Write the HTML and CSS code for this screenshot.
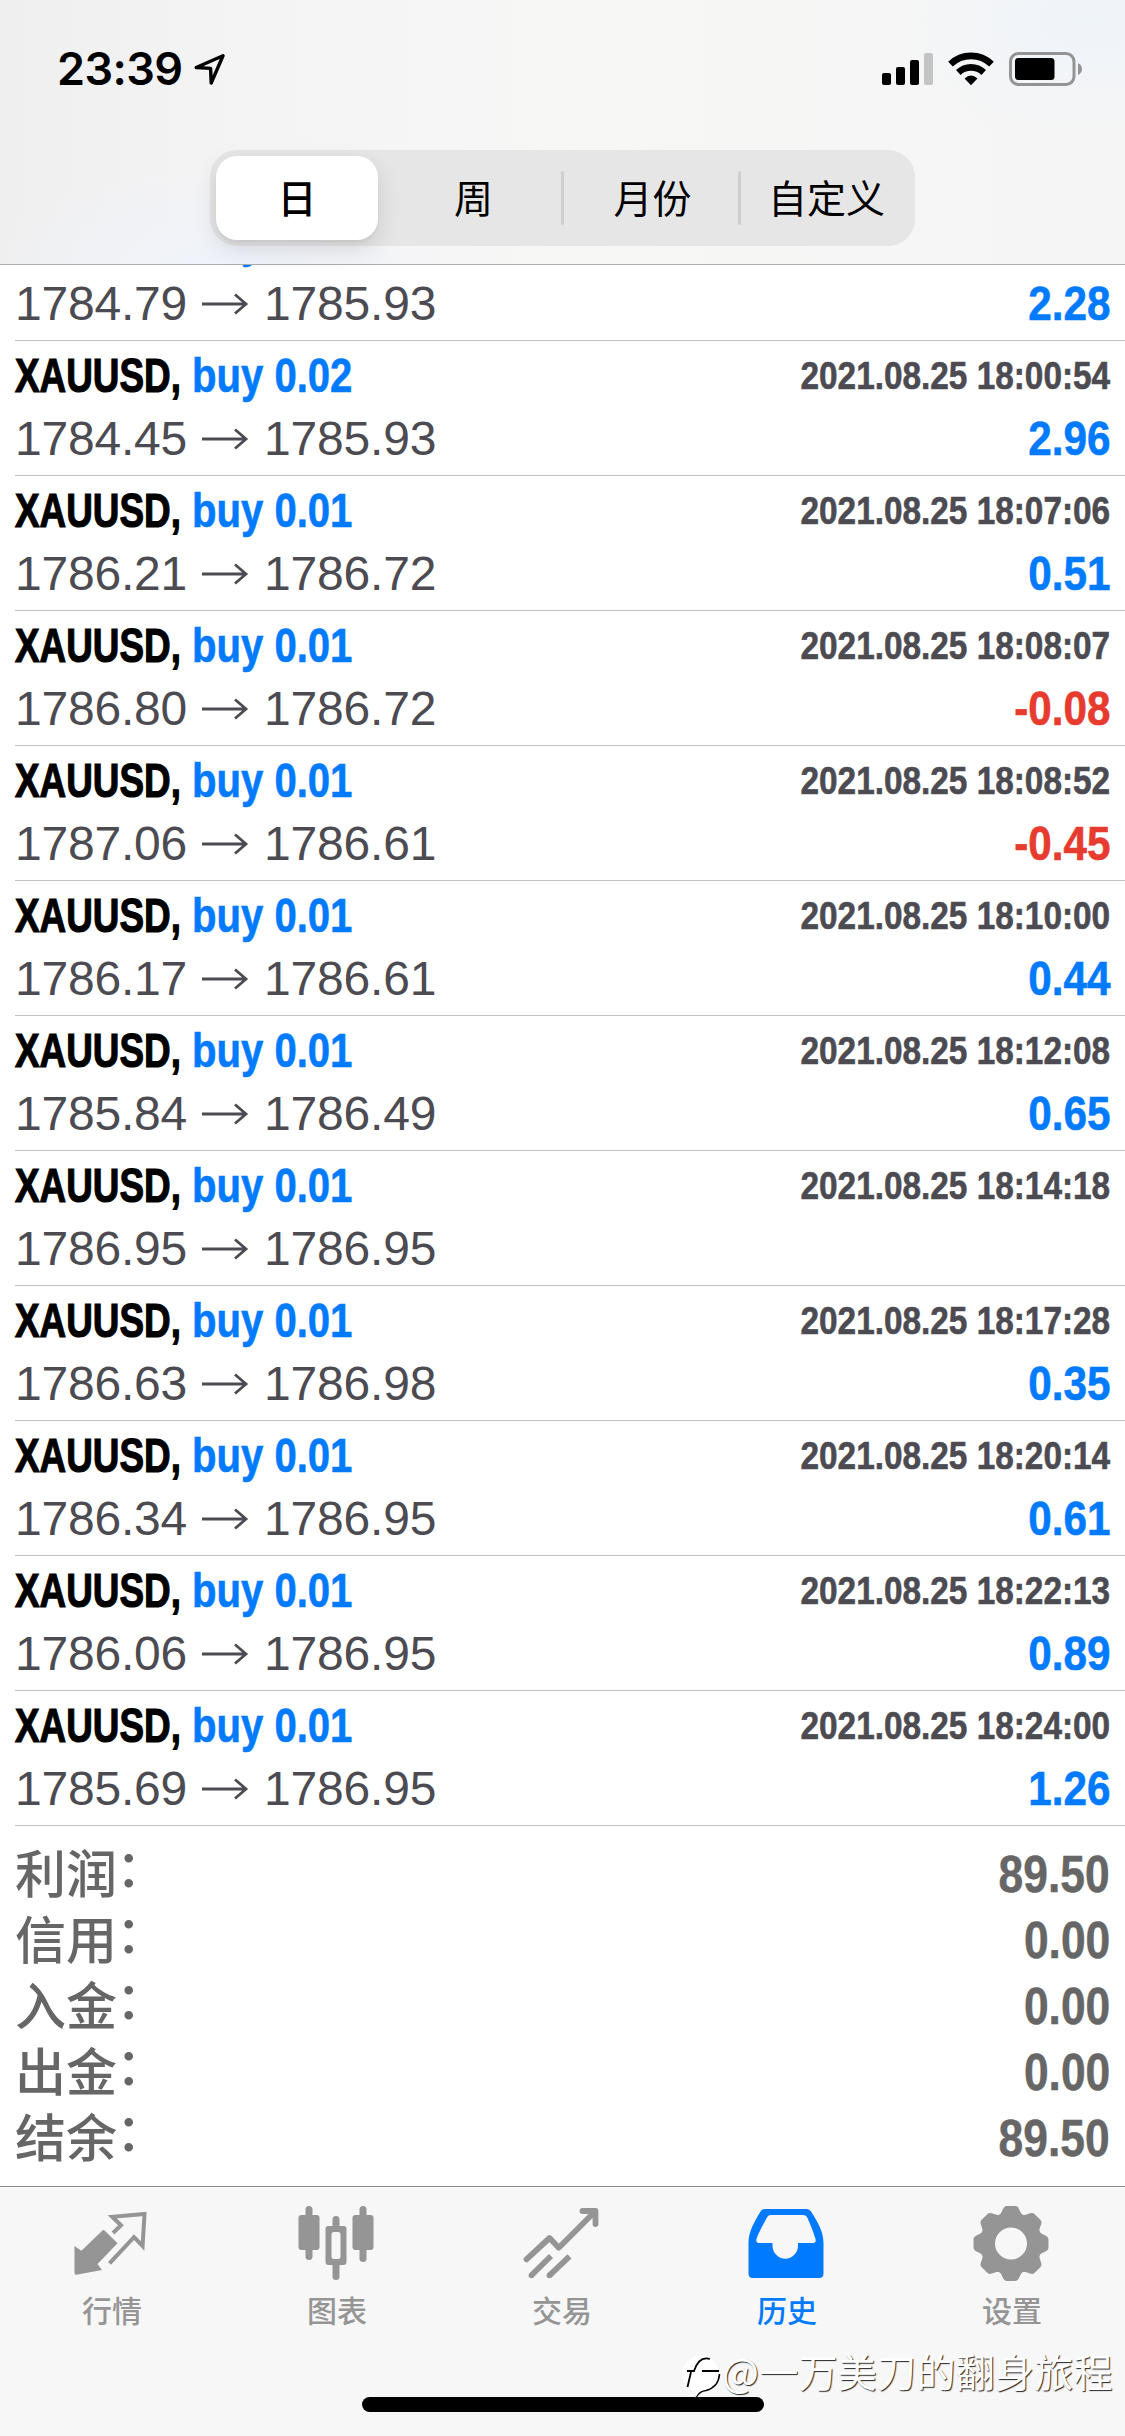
FILE: index.html
```html
<!DOCTYPE html>
<html lang="zh-CN">
<head>
<meta charset="utf-8">
<title>历史</title>
<link rel="stylesheet" href="styles.css">
</head>
<body>
<div class="screen">
  <header class="header">
    <div class="status">
      <span class="clock">23:39</span>
      <svg class="location" width="34" height="34" viewBox="0 0 34 34"><path d="M4.2 16.5 31 4.800 19.200 32 18.600 17.400Z" fill="none" stroke="#000" stroke-width="3.400" stroke-linejoin="round"/></svg>
      <div class="indicators">
        <svg width="51" height="34" viewBox="0 0 51 34"><rect y="21" width="9" height="12" rx="2"/><rect x="14" y="15" width="9" height="18" rx="2"/><rect x="28" y="8" width="9" height="25" rx="2"/><rect x="42" y="1" width="9" height="32" rx="2" fill="#c4c4c4"/></svg>
        <svg width="46" height="34" viewBox="0 0 46 34"><g fill="none" stroke="#000" stroke-width="6.600"><path d="M2.500 12.200A29.500 29.500 0 0 1 43.500 12.200"/><path d="M10.300 20.500A18.300 18.300 0 0 1 35.700 20.500"/></g><path d="M16.500 26.600Q23 20.400 29.500 26.600L23 33.200Z"/></svg>
        <svg width="74" height="34" viewBox="0 0 74 34"><rect x="1.500" y="1.500" width="63.500" height="31" rx="8" fill="none" stroke="#949494" stroke-width="3"/><rect x="6" y="6" width="39.500" height="22" rx="3.500"/><path d="M69 11Q73 13 73 17T69 23Z" fill="#949494"/></svg>
      </div>
    </div>
    <nav class="segments">
      <span class="segment selected">日</span>
      <span class="segment week">周</span>
      <span class="segment divided">月份</span>
      <span class="segment divided custom">自定义</span>
    </nav>
  </header>

  <main class="content">
    <svg class="defs" width="0" height="0"><symbol id="arrow" viewBox="0 0 48 24"><path d="M1 12H45M34 2.500 45 12 34 21.500" fill="none" stroke="#4c4b52" stroke-width="2.800"/></symbol></svg>
    <div class="deals">
      <div class="deal"><div class="line top"><span class="symbol"><b>XAUUSD,</b></span><span class="order">buy 0.01</span></div><div class="line prices"><span>1784.79</span><svg class="arrow"><use href="#arrow"/></svg><span>1785.93</span><span class="profit">2.28</span></div></div>
      <div class="deal"><div class="line top"><span class="symbol"><b>XAUUSD,</b></span><span class="order">buy 0.02</span><span class="date">2021.08.25 18:00:54</span></div><div class="line prices"><span>1784.45</span><svg class="arrow"><use href="#arrow"/></svg><span>1785.93</span><span class="profit">2.96</span></div></div>
      <div class="deal"><div class="line top"><span class="symbol"><b>XAUUSD,</b></span><span class="order">buy 0.01</span><span class="date">2021.08.25 18:07:06</span></div><div class="line prices"><span>1786.21</span><svg class="arrow"><use href="#arrow"/></svg><span>1786.72</span><span class="profit">0.51</span></div></div>
      <div class="deal"><div class="line top"><span class="symbol"><b>XAUUSD,</b></span><span class="order">buy 0.01</span><span class="date">2021.08.25 18:08:07</span></div><div class="line prices"><span>1786.80</span><svg class="arrow"><use href="#arrow"/></svg><span>1786.72</span><span class="profit loss">-0.08</span></div></div>
      <div class="deal"><div class="line top"><span class="symbol"><b>XAUUSD,</b></span><span class="order">buy 0.01</span><span class="date">2021.08.25 18:08:52</span></div><div class="line prices"><span>1787.06</span><svg class="arrow"><use href="#arrow"/></svg><span>1786.61</span><span class="profit loss">-0.45</span></div></div>
      <div class="deal"><div class="line top"><span class="symbol"><b>XAUUSD,</b></span><span class="order">buy 0.01</span><span class="date">2021.08.25 18:10:00</span></div><div class="line prices"><span>1786.17</span><svg class="arrow"><use href="#arrow"/></svg><span>1786.61</span><span class="profit">0.44</span></div></div>
      <div class="deal"><div class="line top"><span class="symbol"><b>XAUUSD,</b></span><span class="order">buy 0.01</span><span class="date">2021.08.25 18:12:08</span></div><div class="line prices"><span>1785.84</span><svg class="arrow"><use href="#arrow"/></svg><span>1786.49</span><span class="profit">0.65</span></div></div>
      <div class="deal"><div class="line top"><span class="symbol"><b>XAUUSD,</b></span><span class="order">buy 0.01</span><span class="date">2021.08.25 18:14:18</span></div><div class="line prices"><span>1786.95</span><svg class="arrow"><use href="#arrow"/></svg><span>1786.95</span></div></div>
      <div class="deal"><div class="line top"><span class="symbol"><b>XAUUSD,</b></span><span class="order">buy 0.01</span><span class="date">2021.08.25 18:17:28</span></div><div class="line prices"><span>1786.63</span><svg class="arrow"><use href="#arrow"/></svg><span>1786.98</span><span class="profit">0.35</span></div></div>
      <div class="deal"><div class="line top"><span class="symbol"><b>XAUUSD,</b></span><span class="order">buy 0.01</span><span class="date">2021.08.25 18:20:14</span></div><div class="line prices"><span>1786.34</span><svg class="arrow"><use href="#arrow"/></svg><span>1786.95</span><span class="profit">0.61</span></div></div>
      <div class="deal"><div class="line top"><span class="symbol"><b>XAUUSD,</b></span><span class="order">buy 0.01</span><span class="date">2021.08.25 18:22:13</span></div><div class="line prices"><span>1786.06</span><svg class="arrow"><use href="#arrow"/></svg><span>1786.95</span><span class="profit">0.89</span></div></div>
      <div class="deal"><div class="line top"><span class="symbol"><b>XAUUSD,</b></span><span class="order">buy 0.01</span><span class="date">2021.08.25 18:24:00</span></div><div class="line prices"><span>1785.69</span><svg class="arrow"><use href="#arrow"/></svg><span>1786.95</span><span class="profit">1.26</span></div></div>
    </div>
    <div class="totals">
      <div class="total"><span class="label">利润<i>：</i></span><span class="sum">89.50</span></div>
      <div class="total"><span class="label">信用<i>：</i></span><span class="sum">0.00</span></div>
      <div class="total"><span class="label">入金<i>：</i></span><span class="sum">0.00</span></div>
      <div class="total"><span class="label">出金<i>：</i></span><span class="sum">0.00</span></div>
      <div class="total"><span class="label">结余<i>：</i></span><span class="sum">89.50</span></div>
    </div>
  </main>

  <footer class="tabbar">
    <div class="tab">
      <svg class="icon" viewBox="0 0 90 90"><path d="M7.500 46 14.400 50.700 35.500 30.600Q36.600 29.500 37.800 30.800L50.500 43.300 30.500 64 35 70 9.500 74.800Q7.500 75 7.500 73Z" fill="currentColor"/><path d="M46 33 54 25.300 45.200 16.800 77.500 14 75.600 46 67 37.200 42.500 63.300" fill="none" stroke="currentColor" stroke-width="4"/></svg>
      <span>行情</span>
    </div>
    <div class="tab">
      <svg class="icon" viewBox="0 0 90 90" fill="currentColor"><rect x="6.500" y="15" width="21" height="35" rx="3"/><rect x="13.500" y="6" width="7" height="54" rx="3.500"/><path fill-rule="evenodd" d="M36.500 26h15a3 3 0 0 1 3 3v33a3 3 0 0 1-3 3h-15a3 3 0 0 1-3-3V29a3 3 0 0 1 3-3Zm5.500 6a2.500 2.500 0 0 0-2.500 2.500v22a2.500 2.500 0 0 0 2.500 2.500h4a2.500 2.500 0 0 0 2.500-2.500v-22A2.500 2.500 0 0 0 46 32Z"/><path d="M40.500 27V19.500a3.500 3.500 0 0 1 7 0V27ZM40.500 64V76.500a3.500 3.500 0 0 0 7 0V64Z"/><rect x="60.500" y="15" width="21" height="35" rx="3"/><rect x="67.500" y="6" width="7" height="56" rx="3.500"/></svg>
      <span>图表</span>
    </div>
    <div class="tab">
      <svg class="icon" viewBox="0 0 90 90" fill="none" stroke="currentColor" stroke-width="5.800" stroke-linejoin="round"><path stroke-linecap="round" d="M9.500 59.300 32.500 38 41.800 47.700 77.500 12M65.500 11H78.500V24"/><path d="M14.500 75.300 34 56M32.500 75.300 52.500 56.300"/><g fill="currentColor" stroke="none"><circle cx="14.500" cy="75.300" r="2.900"/><circle cx="32.500" cy="75.300" r="2.900"/></g></svg>
      <span>交易</span>
    </div>
    <div class="tab active">
      <svg class="icon" viewBox="0 0 90 90" fill="currentColor"><path fill-rule="evenodd" d="M23 9H65Q67.500 9 69 11.500C75 21 81.500 31 81.500 43V73.500Q81.500 78 77 78H11Q6.500 78 6.500 73.500V43C6.500 31 13 21 18.500 11.500Q20 9 23 9ZM29 15Q26 15 24.700 18C20.500 26 16.500 33 14.500 39Q13.500 43 17.500 43H30.500V45.500A12.700 13.200 0 0 0 56 45.500V43H70.500Q74.500 43 73.500 39C71.500 32 69 26 65.500 18Q64.300 15 61 15Z"/></svg>
      <span>历史</span>
    </div>
    <div class="tab">
      <svg class="icon" viewBox="0 0 90 90"><g transform="translate(44 43.500)" fill="currentColor"><circle r="23.500" fill="none" stroke="currentColor" stroke-width="15"/><g id="teeth"><path id="tooth" d="M-13-27.500C-8-30-9-37.500-4-37.500H4C9-37.500 8-30 13-27.500Z"/><use href="#tooth" transform="rotate(45)"/><use href="#tooth" transform="rotate(90)"/><use href="#tooth" transform="rotate(135)"/></g><use href="#teeth" transform="rotate(180)"/></g></svg>
      <span>设置</span>
    </div>
    <div class="home"></div>
    <div class="watermark">
      <svg width="42" height="46" viewBox="0 0 42 46"><circle cx="20.500" cy="20" r="18.500" fill="#fff"/><path d="M16 43Q20 37 26 36.500C35 34 39 27 39.500 20" fill="none" stroke="#000" stroke-width="1.600"/><path d="M15 44 21 22 37 20 36 29 30 34 20 37Z" fill="#fff"/><path d="M7 17H14C17 8 22 2.500 30 5M22 17H39M11 18 7.500 33" fill="none" stroke="#000" stroke-width="1.800"/></svg>
      <span>@一万美刀的翻身旅程</span>
    </div>
  </footer>
</div>
</body>
</html>
```
FILE: styles.css
```css
* { box-sizing: border-box; }

body {
  margin: 0;
  background: #fff;
  font-family: "Liberation Sans", "Noto Sans CJK SC", sans-serif;
}

.screen {
  width: 1125px;
  height: 2436px;
  display: flex;
  flex-direction: column;
  overflow: hidden;
}

/* Status bar and period switcher */
.header {
  height: 265px;
  flex: none;
  display: flex;
  flex-direction: column;
  align-items: center;
  border-bottom: 1px solid #adadaf;
  background:
    radial-gradient(ellipse 240px 100px at 225px 265px, #eff3fa, transparent),
    radial-gradient(ellipse 200px 120px at 1090px 20px, #eff4fa, transparent),
    linear-gradient(90deg, #efefef, #f5f4f5 22%, #f7f7f6 50%, #f5f5f5 100%);
}

.status {
  width: 100%;
  height: 150px;
  padding: 52px 42px 0 57px;
  display: flex;
  align-items: flex-start;
}

.clock {
  width: 135px;
  font: 600 45px/34px Inter, sans-serif;
  letter-spacing: -0.6px;
  white-space: nowrap;
}

.location { margin-top: -1px; }

.indicators {
  margin-left: auto;
  display: flex;
  gap: 15px;
}

.segments {
  width: 705px;
  height: 96px;
  padding: 6px;
  display: grid;
  grid-template-columns: 162px 186px 177px 1fr;
  border-radius: 27px;
  background: #e6e6e7;
}

.segment {
  display: flex;
  align-items: center;
  justify-content: center;
  padding-bottom: 4px;
  font: 400 39px/1 "Noto Sans CJK SC", sans-serif;
  position: relative;
}

.selected {
  border-radius: 21px;
  background: #fff;
  font-weight: 500;
  box-shadow: 0 9px 24px rgba(0, 0, 0, .12), 0 3px 3px rgba(0, 0, 0, .04);
}

.week { padding-left: 5px; }

.custom { padding-left: 3px; }

.divided::before {
  content: "";
  position: absolute;
  left: -3px;
  top: 15px;
  width: 3px;
  height: 54px;
  border-radius: 2px;
  background: #cfcfd2;
}

/* Closed deals */
.content {
  height: 1921px;
  flex: none;
  overflow: hidden;
}

.defs { display: block; }

.deals {
  margin-top: -59px;
  padding-left: 15px;
}

.deal {
  height: 135px;
  padding: 3px 15px 0 0;
  border-bottom: 1px solid #c2c2c4;
}

.line {
  height: 63px;
  display: flex;
  align-items: center;
  font-size: 48px;
  line-height: 64px;
  white-space: nowrap;
}

.top {
  font-weight: 700;
  -webkit-text-stroke: .6px currentColor;
}

.symbol { width: 177px; color: #000; }

.symbol b {
  display: inline-block;
  transform: scaleX(.768);
  transform-origin: left;
  -webkit-text-stroke: 1.2px currentColor;
}

.order {
  color: #007aff;
  transform: scaleX(.835);
  transform-origin: left;
}

.date {
  margin-left: auto;
  font-size: 39px;
  color: #4c4b52;
  transform: scaleX(.855);
  transform-origin: right;
}

.prices {
  color: #4c4b52;
  letter-spacing: -.2px;
}

.arrow {
  width: 48px;
  height: 24px;
  margin: 0 15px 0 14px;
}

.profit {
  margin-left: auto;
  font-weight: 700;
  letter-spacing: 0;
  color: #007aff;
  transform: scaleX(.88);
  transform-origin: right;
  -webkit-text-stroke: .6px currentColor;
}

.loss { color: #e63b2e; }

/* Account summary */
.totals {
  padding: 15px 15px 0;
  color: #666;
}

.total {
  height: 66px;
  display: flex;
  align-items: center;
  justify-content: space-between;
}

.label {
  padding-bottom: 6px;
  font: 500 51px/60px "Noto Sans CJK SC", sans-serif;
}

.label i {
  display: inline-block;
  font-style: normal;
  transform: translate(-1px, -6px);
}

.sum {
  padding-top: 1px;
  font: 700 51px/64px "Liberation Sans", sans-serif;
  transform: scaleX(.87);
  transform-origin: right;
  -webkit-text-stroke: .5px currentColor;
}

/* Tab bar */
.tabbar {
  height: 250px;
  flex: none;
  display: grid;
  grid-template-columns: repeat(5, 1fr);
  border-top: 1px solid #8e8e8e;
  background: #f7f7f7;
  position: relative;
}

.tab {
  padding: 13px 1px 0 0;
  display: flex;
  flex-direction: column;
  align-items: center;
  color: #959595;
  font: 500 30px/39px "Noto Sans CJK SC", sans-serif;
}

.active { color: #007aff; }

.icon { width: 90px; height: 90px; }

.home {
  position: absolute;
  left: 362px;
  top: 210px;
  width: 402px;
  height: 15px;
  border-radius: 8px;
  background: #000;
}

.watermark {
  position: absolute;
  left: 680px;
  top: 167px;
  display: flex;
  color: #fff;
  font: 400 39px/32px "Noto Sans CJK SC", sans-serif;
  letter-spacing: .3px;
  white-space: nowrap;
  text-shadow: 1px 1px 1px rgba(0, 0, 0, .85);
}
```
